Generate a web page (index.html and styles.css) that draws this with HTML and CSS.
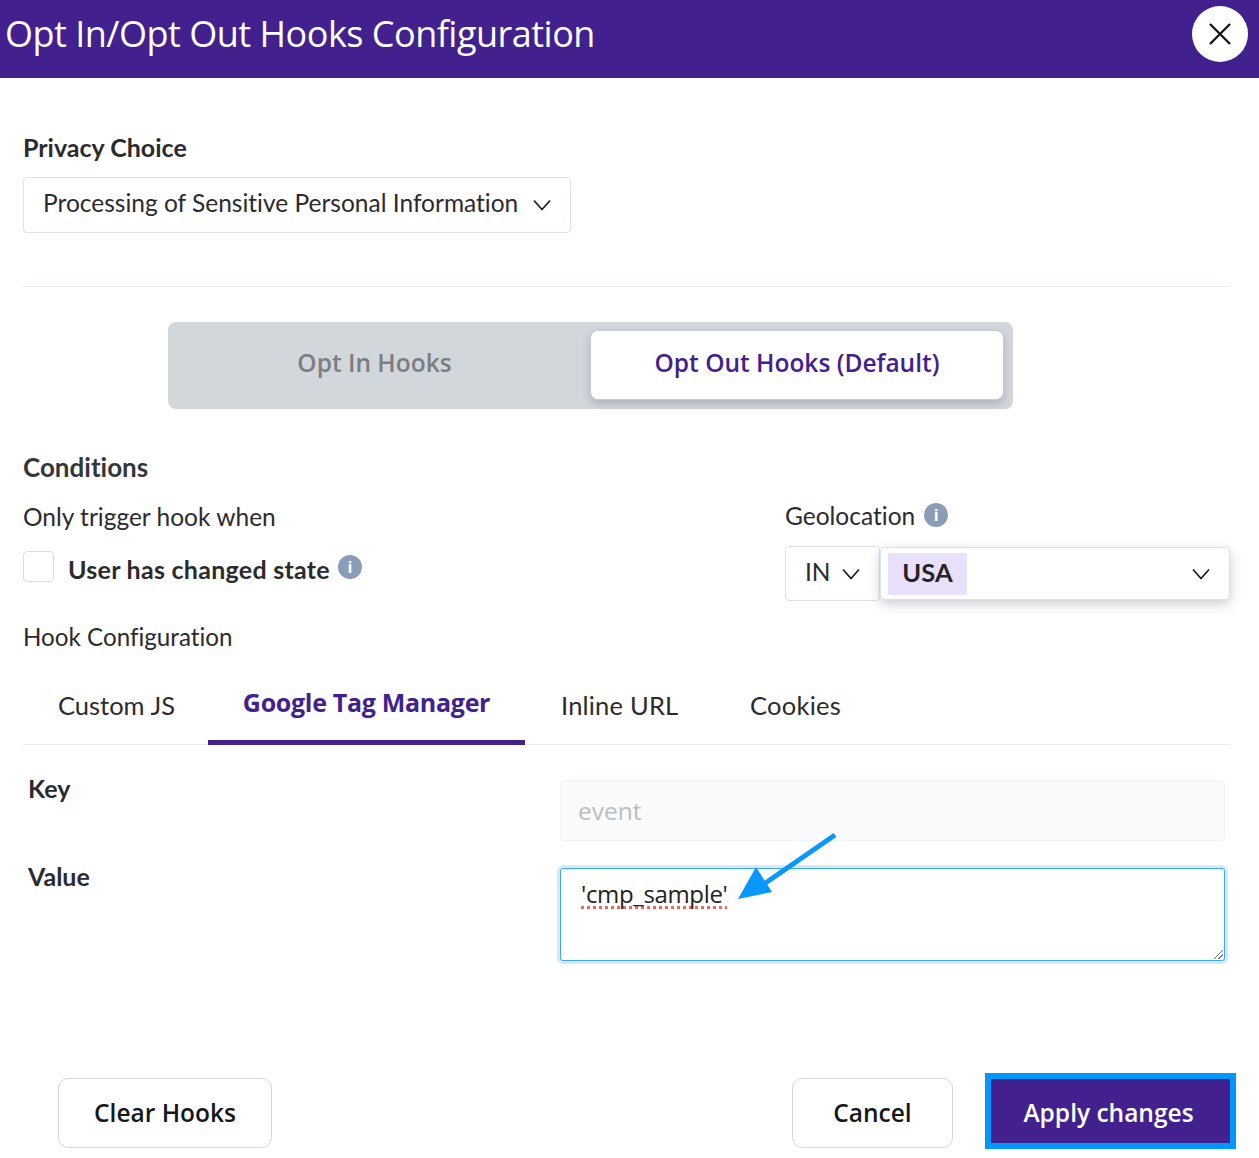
FILE: index.html
```html
<!DOCTYPE html>
<html lang="en">
<head>
<meta charset="utf-8">
<title>Opt In/Opt Out Hooks Configuration</title>
<link rel="stylesheet" href="styles.css">
</head>
<body>
<div class="modal">
  <header class="modal-head">
    <h1 class="modal-title">Opt In/Opt Out Hooks Configuration</h1>
    <button class="close-btn" aria-label="Close">
      <svg class="close-icon" viewBox="0 0 24 24"><path d="M2 2 22 22M22 2 2 22"/></svg>
    </button>
  </header>
  <main class="modal-body">
    <div class="field-label">Privacy Choice</div>
    <div class="select privacy-select">
      <span class="select-text">Processing of Sensitive Personal Information</span>
      <svg class="chev" viewBox="0 0 18 12"><path d="M1 1.500 9 10.500 17 1.500"/></svg>
    </div>
    <hr class="divider">
    <div class="toggle">
      <div class="toggle-opt">Opt In Hooks</div>
      <div class="toggle-opt active">Opt Out Hooks (Default)</div>
    </div>
    <h2 class="section-title">Conditions</h2>
    <div class="conditions">
      <div class="cond-left">
        <div class="plain-label trigger-label">Only trigger hook when</div>
        <div class="check-row">
          <span class="checkbox"></span>
          <span class="check-label">User has changed state</span>
          <span class="info">i</span>
        </div>
      </div>
      <div class="cond-right">
        <div class="plain-label geo-label"><span>Geolocation</span><span class="info">i</span></div>
        <div class="geo-row">
          <div class="select in-select">
            <span class="select-text">IN</span>
            <svg class="chev" viewBox="0 0 18 12"><path d="M1 1.500 9 10.500 17 1.500"/></svg>
          </div>
          <div class="select usa-select">
            <span class="tag">USA</span>
            <svg class="chev" viewBox="0 0 18 12"><path d="M1 1.500 9 10.500 17 1.500"/></svg>
          </div>
        </div>
      </div>
    </div>
    <div class="plain-label hook-label">Hook Configuration</div>
    <nav class="tabs">
      <div class="tab tab-js">Custom JS</div>
      <div class="tab tab-active">Google Tag Manager</div>
      <div class="tab tab-url">Inline URL</div>
      <div class="tab tab-cookies">Cookies</div>
    </nav>
    <div class="form-grid">
      <div class="form-key">Key</div>
      <div class="input-disabled">event</div>
      <div class="form-key form-key-value">Value</div>
      <div class="textarea"><span class="spell">'cmp_sample'</span></div>
    </div>
  </main>
  <footer class="actions">
    <button class="btn btn-clear">Clear Hooks</button>
    <div class="actions-right">
      <button class="btn btn-cancel">Cancel</button>
      <button class="btn btn-apply">Apply changes</button>
    </div>
  </footer>
  <svg class="annot-arrow" viewBox="0 0 110 80">
    <path class="annot-shaft" d="M98 3 27 52"/>
    <path class="annot-head" d="M1 67 19 35 35 60Z"/>
  </svg>
</div>
</body>
</html>
```
FILE: styles.css
```css
* { box-sizing: border-box; }
html, body { margin: 0; padding: 0; background: #fff; }
body { font-family: "Lato", "Liberation Sans", sans-serif; color: #2b2b2f; font-variant-ligatures: none; }
.modal { position: relative; width: 1259px; height: 1158px; overflow: hidden; }

.modal-head { height: 78px; background: #42218e; display: flex; align-items: center; justify-content: space-between; padding: 0 11px 10px 5px; }
.modal-title { margin: 0; font: 400 36px/1 "Open Sans", sans-serif; color: #fff; letter-spacing: -.5px; }
.close-btn { width: 56px; height: 56px; border: 0; border-radius: 50%; background: #fff; display: flex; align-items: center; justify-content: center; padding: 0; }
.close-icon { width: 24px; height: 24px; fill: none; stroke: #17171b; stroke-width: 2.4; }

.modal-body { padding: 54px 29px 0 23px; }
.field-label { font-size: 25px; line-height: 30px; font-weight: 700; height: 31px; }
.select { display: flex; align-items: center; justify-content: space-between; background: #fff; border: 1px solid #d8e3ea; border-radius: 4px; font-size: 24.5px; }
.select-text { padding-bottom: 6px; }
.privacy-select { width: 548px; height: 56px; margin-top: 14px; padding: 0 19px; }
.chev { width: 18px; height: 12px; fill: none; stroke: #1c1c20; stroke-width: 1.7; flex: none; }
.divider { border: 0; border-top: 1px solid #e9ecef; margin: 53px 0 0; }

.toggle { width: 845px; height: 87px; margin: 35px 0 0 145px; background: #d2d7dc; border-radius: 8px; display: flex; align-items: center; padding: 0 9px 0 0; font-family: "Open Sans", sans-serif; }
.toggle-opt { font-size: 24.5px; font-weight: 600; color: #7b7e82; text-align: center; }
.toggle-opt:first-child { width: 413px; padding-bottom: 6px; }
.toggle-opt.active { margin-left: 9px; width: 414px; height: 70px; line-height: 64px; margin-top: -2px; background: #fff; color: #42218e; border-radius: 8px; border: 1px solid #c6ccd3; box-shadow: 0 4px 8px rgba(80, 90, 105, .28); }

.section-title { margin: 42px 0 0; font-size: 26px; font-weight: 700; line-height: 32px; color: #33373c; }
.conditions { display: flex; margin-top: 18px; }
.cond-left { width: 762px; }
.plain-label { font-size: 24.5px; line-height: 30px; }
.trigger-label { position: relative; top: 1px; }
.check-row { display: flex; align-items: center; margin-top: 20px; }
.checkbox { width: 31px; height: 31px; border: 1px solid #d9dcdf; border-radius: 4px; }
.check-label { font-weight: 700; font-size: 25px; letter-spacing: .27px; margin-left: 14px; position: relative; top: 2px; }
.info { display: inline-flex; align-items: center; justify-content: center; width: 24px; height: 24px; border-radius: 50%; background: #8a9cb6; color: #fff; font: 700 16px/1 "Open Sans", sans-serif; margin-left: 8px; }
.geo-label { display: flex; align-items: center; white-space: nowrap; }
.geo-label .info { margin: 0 0 2px 9px; }
.geo-row { display: flex; margin-top: 15px; align-items: flex-start; }
.in-select { width: 95px; height: 55px; padding: 0 19px; }
.in-select .select-text { padding-bottom: 4px; }
.usa-select { width: 350px; height: 53px; margin-top: 1px; padding: 0 19px 0 7px; box-shadow: 0 4px 12px rgba(80, 90, 105, .3); border-radius: 5px; }
.tag { background: #e9e1fb; font-weight: 700; font-size: 25.5px; line-height: 38px; height: 42px; width: 79px; text-align: center; border-radius: 2px; color: #25232b; }

.hook-label { margin-top: 21px; font-size: 24.2px; }
.tabs { display: flex; margin-top: 13px; height: 80px; border-bottom: 1px solid #e9ecef; }
.tab { font-size: 25.5px; line-height: 32px; padding-top: 24px; color: #2b2b2f; }
.tab-js { margin-left: 35px; width: 150px; }
.tab-active { width: 317px; height: 80px; padding: 21px 0 0 0; text-align: center; color: #42218e; font: 700 25px/32px "Open Sans", sans-serif; letter-spacing: -.3px; border-bottom: 5px solid #42218e; }
.tab-url { margin-left: 36px; width: 189px; letter-spacing: .2px; }
.tab-cookies { letter-spacing: .25px; }

.form-grid { display: grid; grid-template-columns: 537px 665px; column-gap: 0; }
.form-key { font-weight: 700; font-size: 25px; line-height: 30px; padding: 28px 0 0 5px; }
.form-key-value { padding-top: 20px; }
.input-disabled { margin-top: 35px; height: 61px; background: #f9fafc; border: 1px solid #f0f2f4; border-radius: 4px; color: #bcbdbf; font: 400 24.5px/59px "Open Sans", sans-serif; padding-left: 17px; }
.textarea { margin-top: 27px; height: 93px; border: 1px solid #3aa6ff; border-radius: 3px; box-shadow: 0 0 0 3px #d3eaff; font: 400 24px/30px "Open Sans", sans-serif; padding: 10px 20px; color: #222; background: #fff; position: relative; }
.spell { text-decoration: underline dotted #f4635f 3px; text-decoration-skip-ink: none; text-underline-offset: 3px; letter-spacing: -.35px; }
.textarea::after { content: ""; position: absolute; right: 1px; bottom: 1px; width: 9px; height: 9px; background: linear-gradient(135deg, transparent 45%, #777 45%, #777 55%, transparent 55%, transparent 70%, #777 70%, #777 80%, transparent 80%); }

.actions { position: absolute; left: 58px; right: 23px; bottom: 9px; display: flex; justify-content: space-between; align-items: flex-end; }
.actions-right { display: flex; align-items: flex-end; gap: 32px; }
.btn { font: 600 24.5px/1 "Open Sans", sans-serif; border-radius: 10px; background: #fff; border: 1px solid #d8d8d8; height: 70px; color: #15171c; padding: 0; margin-bottom: 1px; }
.btn-clear { width: 214px; }
.btn-cancel { width: 161px; }
.btn-apply { width: 251px; height: 76px; margin-bottom: 0; padding: 4px 4px 0 0; background: #42218e; color: #fff; border: 6px solid #0296ff; border-radius: 0; }

.annot-arrow { position: absolute; left: 737px; top: 832px; width: 110px; height: 80px; }
.annot-shaft { fill: none; stroke: #0a97fb; stroke-width: 5; }
.annot-head { fill: #0a97fb; }
```
